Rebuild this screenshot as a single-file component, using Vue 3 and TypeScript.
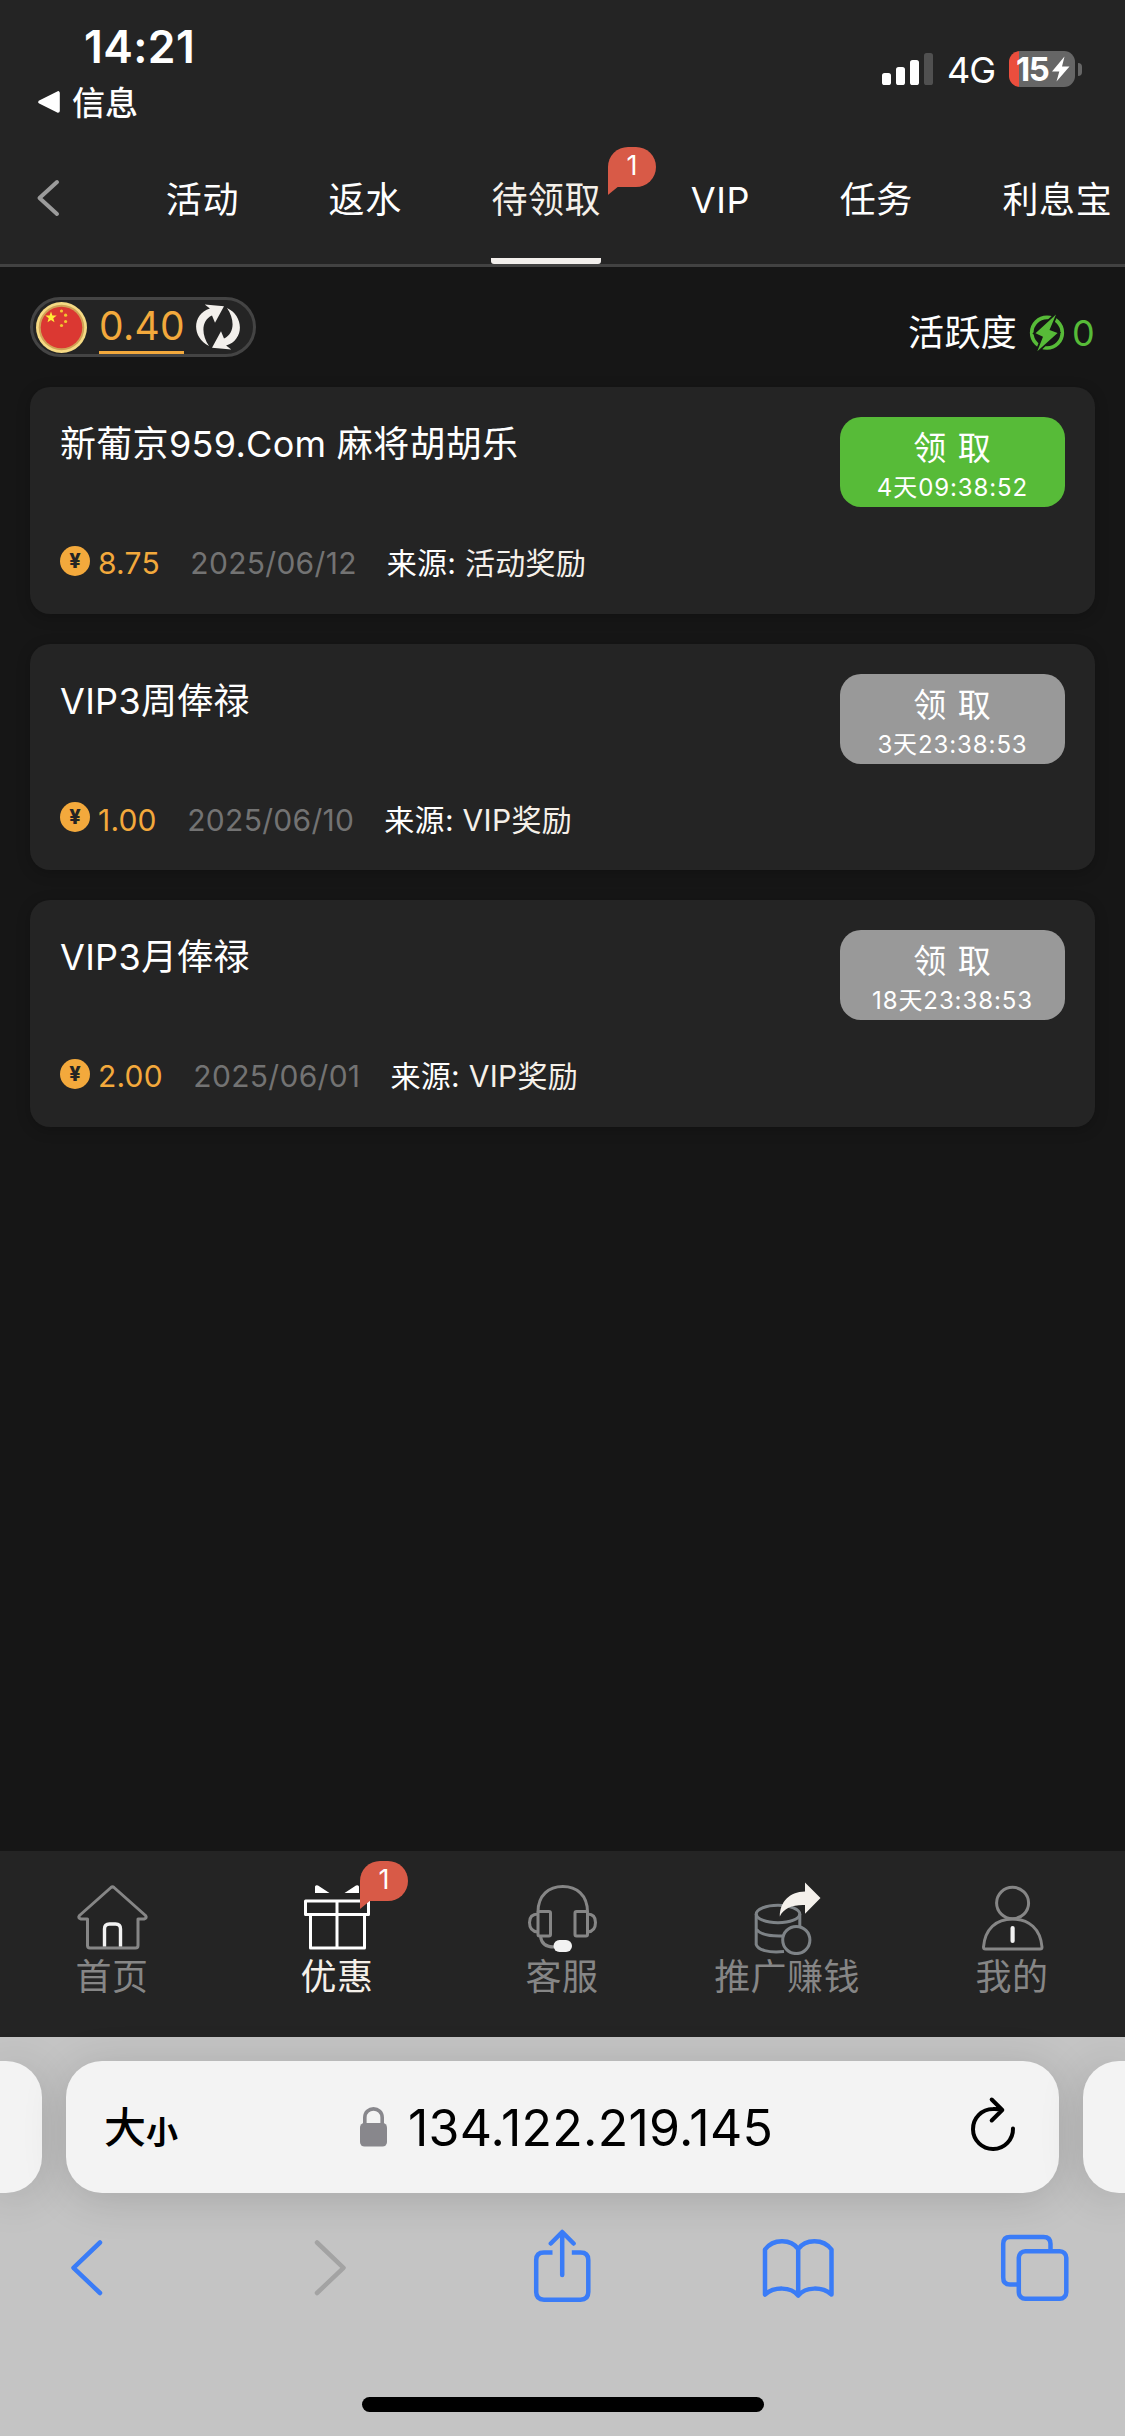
<script setup lang="ts">
interface Tab { label: string; active?: boolean; badge?: number }
interface Reward {
  title: string
  amount: string
  date: string
  source: string
  countdown: string
  ready: boolean
}

const tabs: Tab[] = [
  { label: '活动' },
  { label: '返水' },
  { label: '待领取', active: true, badge: 1 },
  { label: 'VIP' },
  { label: '任务' },
  { label: '利息宝' },
]

const rewards: Reward[] = [
  { title: '新葡京959.Com 麻将胡胡乐', amount: '8.75', date: '2025/06/12', source: '活动奖励', countdown: '4天09:38:52', ready: true },
  { title: 'VIP3周俸禄', amount: '1.00', date: '2025/06/10', source: 'VIP奖励', countdown: '3天23:38:53', ready: false },
  { title: 'VIP3月俸禄', amount: '2.00', date: '2025/06/01', source: 'VIP奖励', countdown: '18天23:38:53', ready: false },
]
</script>

<template>
  <div class="screen">
    <header class="status">
      <div class="status-left">
        <div class="time">14:21</div>
        <div class="return">
          <svg width="24" height="24" viewBox="37 90 24 24"><path d="M40 102 L58 93 V111 Z" fill="#fff" stroke="#fff" stroke-width="3.6" stroke-linejoin="round" /></svg>
          <span>信息</span>
        </div>
      </div>
      <div class="status-right">
        <svg width="51" height="32" viewBox="882 53 51 32" fill="#fff">
          <rect x="882" y="73" width="9" height="12" rx="2.6" />
          <rect x="896" y="67" width="9" height="18" rx="2.6" />
          <rect x="910" y="60" width="9" height="25" rx="2.6" />
          <rect x="924" y="53" width="9" height="32" rx="2.6" fill="#505050" />
        </svg>
        <span class="network">4G</span>
        <div class="battery">
          <span class="level">15</span>
          <svg width="18" height="26" viewBox="1052 56 18 26"><path d="M1064.5 56.5 L1052 71.5 H1059.3 L1056.5 81.5 L1069.5 66.5 H1062 Z" fill="#fff" /></svg>
        </div>
        <span class="nub"></span>
      </div>
    </header>

    <nav class="tabs">
      <svg class="back" width="26" height="40" viewBox="35 178 26 40"><path d="M57 182 L39.5 198 L57 214" fill="none" stroke="#9b9b9b" stroke-width="4" stroke-linecap="round" stroke-linejoin="round" /></svg>
      <div v-for="t in tabs" :key="t.label" class="tab" :class="{ active: t.active }">
        {{ t.label }}
        <span v-if="t.badge" class="badge tab-badge">{{ t.badge }}</span>
      </div>
    </nav>

    <main>
      <div class="summary">
        <div class="wallet">
          <svg width="51" height="51" viewBox="0 0 51 51">
            <circle cx="25.5" cy="25.5" r="25.5" fill="#f6da84" />
            <circle cx="25.5" cy="25.5" r="22.8" fill="#d0a355" />
            <circle cx="25.5" cy="25.5" r="20.8" fill="#db3832" />
            <path d="M15 9.5 l1.4 4 4.3 .1 -3.4 2.6 1.2 4.1 -3.5-2.4 -3.5 2.4 1.2-4.1 -3.4-2.6 4.3-.1z" fill="#ffed37" />
            <g fill="#f4c52f"><circle cx="25.5" cy="9" r="1.6" /><circle cx="29.6" cy="13.2" r="1.6" /><circle cx="29.6" cy="19.5" r="1.6" /><circle cx="25.5" cy="23.5" r="1.6" /></g>
          </svg>
          <span class="balance">0.40</span>
          <svg width="44" height="46" viewBox="195.6 305.8 44 46" fill="#f3f0ec">
            <path d="M208.6 347.8 C191.5 340 191 316 209.5 310.3 L204.3 306.3 L223.6 308 L214.6 324.5 L211.6 317.2 C201 322 200.5 336 208.6 347.8 Z" />
            <path d="M208.6 347.8 C191.5 340 191 316 209.5 310.3 L204.3 306.3 L223.6 308 L214.6 324.5 L211.6 317.2 C201 322 200.5 336 208.6 347.8 Z" transform="rotate(180 217.6 328.8)" />
          </svg>
        </div>
        <div class="activity">
          <span class="activity-label">活跃度</span>
          <svg width="36" height="38" viewBox="1029 314 36 38">
            <circle cx="1047" cy="332.7" r="15.3" fill="none" stroke="#57bb38" stroke-width="3.7" />
            <path d="M1056 314.5 L1035.5 333.2 L1043 336.7 L1037.3 351.2 L1057.6 332.9 L1049.5 330 Z" fill="#57bb38" stroke="#161616" stroke-width="3.6" paint-order="stroke" />
          </svg>
          <span class="activity-value">0</span>
        </div>
      </div>

      <section class="list">
        <article v-for="r in rewards" :key="r.title" class="card">
          <div class="info">
            <div class="title">{{ r.title }}</div>
            <div class="meta">
              <span class="coin">¥</span>
              <span class="amount">{{ r.amount }}</span>
              <span class="date">{{ r.date }}</span>
              <span class="source">来源: <em>{{ r.source }}</em></span>
            </div>
          </div>
          <button class="claim" :class="{ ready: r.ready }">
            <span class="claim-label">领 取</span>
            <span class="claim-time">{{ r.countdown }}</span>
          </button>
        </article>
      </section>
    </main>

    <nav class="dock">
      <div class="item">
        <svg width="75" height="75" viewBox="75 1880 75 75" fill="none" stroke="#868686" stroke-width="3" stroke-linejoin="round">
          <path d="M87.5 1919 V1945.5 Q87.5 1948 90 1948 H135.5 Q138 1948 138 1945.5 V1919 H144 Q147.5 1918 145.5 1915.5 L114 1887.5 Q112.5 1886.3 111 1887.5 L79.5 1915.5 Q77.5 1918 81 1919 Z" />
          <path d="M104.5 1946.5 V1929 Q104.5 1924 109.5 1924 H115.5 Q120.5 1924 120.5 1929 V1946.5" stroke="#f2f2f2" stroke-width="3.4" />
        </svg>
        <span>首页</span>
      </div>
      <div class="item on">
        <svg width="75" height="75" viewBox="300 1880 75 75" fill="none" stroke="#fff" stroke-width="3" stroke-linejoin="round">
          <path d="M305.5 1901 H368.5 V1914.5 H305.5 Z M310.5 1914.5 V1948 H364.5 V1914.5 M337 1901 V1948" />
          <path d="M315 1893 V1886.5 Q316 1884.5 318 1885.5 L329.5 1893 Z M359 1893 V1886.5 Q358 1884.5 356 1885.5 L344.5 1893 Z" fill="#fff" stroke="none" />
        </svg>
        <span>优惠</span>
        <i class="badge dock-badge">1</i>
      </div>
      <div class="item">
        <svg width="75" height="75" viewBox="525 1880 75 75" fill="none" stroke="#868686" stroke-width="3" stroke-linejoin="round">
          <path d="M538 1912 C538 1895 549 1886.5 562.8 1886.5 C576.5 1886.5 587.5 1895 587.5 1912" />
          <rect x="538" y="1911.5" width="12.5" height="24.5" rx="1.5" /><rect x="575" y="1911.5" width="12.5" height="24.5" rx="1.5" />
          <path d="M538 1914 Q529.5 1914 529.5 1922.5 Q529.5 1931.5 538 1932 M587.5 1914 Q595.5 1914 595.5 1922.5 Q595.5 1931.5 587.5 1932 M540.5 1936 Q541.5 1947 554 1947" />
          <rect x="553.5" y="1940" width="18.5" height="12" rx="6" fill="#f2f2f2" stroke="none" />
        </svg>
        <span>客服</span>
      </div>
      <div class="item">
        <svg width="75" height="75" viewBox="750 1880 75 75" fill="none" stroke="#7e8387" stroke-width="3">
          <ellipse cx="778" cy="1914" rx="21.8" ry="8.8" />
          <path d="M756.2 1914 V1944.5 C758 1950 768 1953 784 1951.5 M756.2 1929 C760 1934.5 770 1936.5 783 1936 M799.8 1914 V1928" />
          <circle cx="796.3" cy="1940" r="13.6" fill="#242424" />
          <path d="M805 1882.5 L820.5 1898 L805 1913.8 V1905 C793 1904.5 783.5 1908 779.8 1916.5 C780 1902 789 1892 805 1891.5 Z" fill="#f4f0eb" stroke="none" />
        </svg>
        <span>推广赚钱</span>
      </div>
      <div class="item">
        <svg width="75" height="75" viewBox="975 1880 75 75" fill="none" stroke="#868686" stroke-width="3" stroke-linejoin="round">
          <ellipse cx="1012.6" cy="1903" rx="16" ry="15.7" />
          <path d="M983.5 1947 C985 1929 996 1919 1012.6 1919 C1029 1919 1040.5 1929 1042 1947 Q1042 1949 1040 1949 H985.5 Q983.5 1949 983.5 1947 Z" />
          <path d="M1012.6 1928 V1941" stroke="#f2f2f2" stroke-width="4.2" stroke-linecap="round" />
        </svg>
        <span>我的</span>
      </div>
    </nav>

    <footer class="browser">
      <div class="pages">
        <div class="page side left"></div>
        <div class="page address">
          <div class="size"><b>大</b><small>小</small></div>
          <div class="host">
            <svg width="28" height="40" viewBox="360 2107 28 40"><rect x="360" y="2123" width="27" height="23.5" rx="4.5" fill="#88878c" /><path d="M364.8 2125 V2117.5 C364.8 2106 382.2 2106 382.2 2117.5 V2125" fill="none" stroke="#88878c" stroke-width="3.6" /></svg>
            <span>134.122.219.145</span>
          </div>
          <svg class="reload" width="48" height="58" viewBox="969 2096 48 58" fill="none" stroke="#000" stroke-width="4" stroke-linecap="round" stroke-linejoin="round"><path d="M1013 2129.5 A20 20 0 1 1 993 2110 Q998 2109.8 1002 2111 M991.7 2100.5 L1002.3 2111 L991.7 2121.5" /></svg>
        </div>
        <div class="page side right"></div>
      </div>
      <div class="tools">
        <svg width="36" height="76" viewBox="69 2229 36 76"><path d="M100 2242.5 L73.5 2267.8 L100 2293" /></svg>
        <svg class="off" width="36" height="76" viewBox="312 2229 36 76"><path d="M317 2242.5 L343.5 2267.8 L317 2293" /></svg>
        <svg class="share" width="60" height="76" viewBox="532 2229 60 76"><path d="M552.5 2252.5 H544 Q536.2 2252.5 536.2 2260 V2292 Q536.2 2299.7 544 2299.7 H580.5 Q588.3 2299.7 588.3 2292 V2260 Q588.3 2252.5 580.5 2252.5 H571.8" stroke-linecap="butt" /><path d="M562.2 2275 V2232.5 M550.8 2243.5 L562.2 2232 L573.6 2243.5" /></svg>
        <svg class="book" width="74" height="76" viewBox="761 2229 74 76"><path d="M798.2 2248.5 V2295.5 M765 2249.5 C773 2238.5 791 2238.5 798.2 2249 C805.5 2238.5 823.5 2238.5 831.5 2249.5 V2294.5 C822 2286.5 806 2286.5 798.2 2295.5 C790.5 2286.5 774.5 2286.5 765 2294.5 Z" /></svg>
        <svg class="windows" width="70" height="76" viewBox="1000 2229 70 76"><path d="M1020 2284.5 H1010 Q1003.2 2284.5 1003.2 2277.5 V2244 Q1003.2 2237 1010 2237 H1043.5 Q1050.5 2237 1050.5 2244 V2251" stroke-linecap="butt" /><rect x="1018.8" y="2251.3" width="47.5" height="47.5" rx="6.5" /></svg>
      </div>
      <div class="indicator"></div>
    </footer>
  </div>
</template>

<style>
body { background: #161616; }
</style>

<style scoped>
* { box-sizing: border-box; }
svg { display: block; flex: none; }
.screen {
  width: 1125px; height: 2436px; overflow: hidden;
  display: flex; flex-direction: column;
  background: #161616; color: #fff;
  font-family: Inter, "Noto Sans CJK SC", sans-serif;
  font-size: 36px; font-weight: 370;
}
.status { height: 132px; background: #242424; display: flex; justify-content: space-between; }
.status-left { padding: 27px 0 0 37px; }
.time { height: 40px; line-height: 40px; padding-left: 47px; font-size: 44.5px; font-weight: 600; letter-spacing: 0.4px; }
.return { display: flex; align-items: center; gap: 11px; height: 36px; margin-top: 17px; font-size: 33px; line-height: 36px; font-weight: 500; }
.return span { position: relative; top: 1px; }
.status-right { display: flex; align-items: center; height: 36px; margin: 51px 43px 0 0; }
.network { font-size: 36px; line-height: 36px; margin: 2px 0 0 14px; width: 62px; letter-spacing: -1px; font-weight: 400; }
.battery { width: 66px; height: 36px; border-radius: 11px; display: flex; align-items: center; background: linear-gradient(90deg, #eb4e3d 10px, #666 10px); padding-left: 7px; }
.level { font-size: 33px; line-height: 36px; font-weight: 700; letter-spacing: -1.5px; width: 36px; }
.nub { width: 4px; height: 13px; margin-left: 3px; border-radius: 0 5px 5px 0; background: #666; }

.tabs { height: 135px; background: #242424; border-bottom: 3px solid #424242; display: flex; padding-left: 35px; overflow: hidden; }
.back { margin: 46px 60px 0 0; }
.tab { position: relative; flex: none; margin: 0 44.8px; height: 132px; line-height: 136px; letter-spacing: 0.6px; }
.tab.active { color: #f5f0e9; border-bottom: 6px solid #f2efec; border-radius: 0 0 3px 3px; }
.badge {
  position: absolute; width: 48px; height: 40px; border-radius: 20px 20px 20px 0;
  background: #d85a47; color: #fff; font: 400 27px/38px Inter, sans-serif; text-align: center; letter-spacing: 0;
}
.badge::after { content: ""; position: absolute; left: 0; top: 39px; width: 11px; height: 9px; background: #d85a47; clip-path: polygon(0 0, 100% 0, 0 100%); }
.tab-badge { left: 116.5px; top: 15px; }

main { flex: 1; padding: 30px 30px 0; }
.summary { display: flex; justify-content: space-between; height: 60px; }
.wallet { display: flex; align-items: center; height: 60px; width: 226px; padding-left: 3px; border: 3px solid #444; border-radius: 30px; background: #242424; }
.balance { width: 85px; height: 54px; margin: 0 12px; border-bottom: 3px solid #f3a93c; color: #f3a93c; font-size: 39px; line-height: 51px; text-align: center; letter-spacing: 0.3px; }
.activity { display: flex; align-items: center; padding-top: 12px; height: 60px; line-height: 48px; }
.activity-label { letter-spacing: 0.3px; margin-right: 12px; }
.activity-value { color: #57bb38; margin-left: 7px; width: 23px; }

.list { display: flex; flex-direction: column; gap: 30px; margin-top: 30px; }
.card { display: flex; justify-content: space-between; height: 226.5px; padding: 30px; border-radius: 20px; background: #242424; box-shadow: 0 3px 14px rgba(0, 0, 0, .22); }
.title { height: 52px; line-height: 54px; letter-spacing: 0.3px; }
.meta { display: flex; align-items: center; height: 36px; margin-top: 76px; font-size: 30px; line-height: 36px; }
.coin { width: 30px; height: 30px; margin-top: -5px; border-radius: 50%; background: #f3a93c; color: #242424; font: 800 20px/30px Inter, sans-serif; text-align: center; }
.amount { margin-left: 8px; color: #f3a93c; letter-spacing: 0.2px; }
.date { margin-left: 30.5px; color: #737373; letter-spacing: 0.3px; }
.source { margin-left: 30px; letter-spacing: 0.3px; }
.source em { font-style: normal; color: #f5f0e9; }
.claim { width: 225px; height: 90px; border: 0; border-radius: 21px; padding: 10px 0 0; background: #999; color: #fff; font-family: inherit; font-weight: 370; display: flex; flex-direction: column; align-items: center; }
.claim.ready { background: #57bb38; }
.claim-label { font-size: 33px; line-height: 42px; letter-spacing: 1px; }
.claim-time { font-size: 24px; line-height: 37px; letter-spacing: 0.9px; }

.dock { height: 186px; background: #242424; display: flex; }
.item { position: relative; width: 225px; display: flex; flex-direction: column; align-items: center; padding-top: 29px; color: #868686; line-height: 44px; letter-spacing: 0.4px; }
.item.on { color: #f5f0e9; }
.item > span { margin-left: -1px; }
.dock-badge { left: 135px; top: 10px; }

.browser { height: 399px; background: #c4c4c4; }
.pages { display: flex; gap: 24px; padding-top: 24px; height: 156px; }
.page { height: 132px; background: #f3f3f3; box-shadow: 0 6px 44px rgba(0, 0, 0, .15); }
.side { width: 42px; flex: none; }
.left { border-radius: 0 36px 36px 0; }
.right { border-radius: 36px 0 0 36px; }
.address { flex: none; width: 993px; border-radius: 36px; display: flex; align-items: center; color: #000; padding-left: 38px; }
.size { display: flex; align-items: baseline; width: 256px; line-height: 60px; padding-top: 6px; }
.size b { font-size: 42px; font-weight: 500; }
.size small { font-size: 32px; font-weight: 700; position: relative; top: 1px; }
.host { display: flex; align-items: center; gap: 20px; width: 609px; font-size: 50px; line-height: 60px; letter-spacing: 0.25px; font-weight: 400; }
.host svg { margin-top: -1px; }
.host span { padding-top: 1px; }
.reload { margin-top: -6px; }
.tools { display: flex; height: 76px; margin-top: 36px; padding-left: 69px; }
.tools svg { fill: none; stroke: #3a7cf7; stroke-width: 4.5; stroke-linecap: round; stroke-linejoin: round; }
.tools .off { stroke: #a3a3a3; margin-left: 207px; }
.tools .share { margin-left: 184px; }
.tools .book { margin-left: 169px; }
.tools .windows { margin-left: 165px; }
.indicator { width: 402px; height: 15px; margin: 92px auto 0; border-radius: 8px; background: #000; }
</style>
